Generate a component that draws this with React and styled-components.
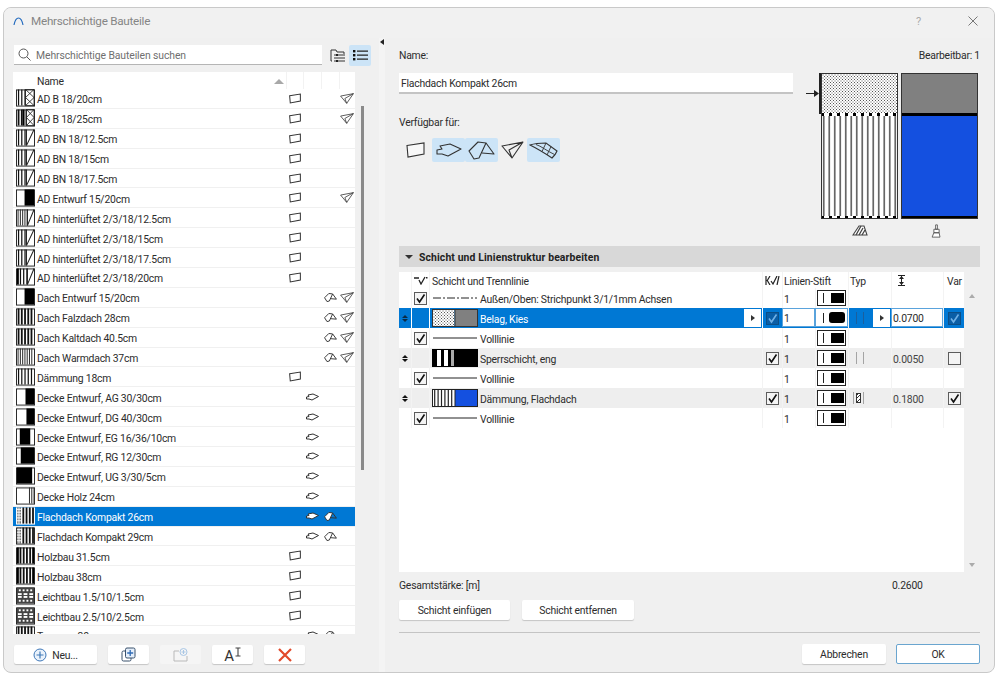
import React from 'react';
import styled, { createGlobalStyle } from 'styled-components';

const GlobalStyle = createGlobalStyle`
    html, body {
        margin: 0;
        padding: 0;
        background: #fff;
        overflow: hidden;
    }
    * { box-sizing: border-box; }
`;

const Window = styled.div`
    width: 992px;
    height: 666px;
    margin: 7px 0 0 3px;
    background: #f0f0f0;
    border: 1px solid #c9c9c9;
    border-radius: 8px;
    overflow: hidden;
    display: flex;
    flex-direction: column;
    font-family: Roboto, "Noto Sans", sans-serif;
    font-size: 10.4px;
    letter-spacing: -0.22px;
    color: #2c2c2c;
`;

const TitleBar = styled.div`
    height: 30px;
    flex: none;
    display: flex;
    align-items: center;
    padding: 0 16px 4px 9px;
    color: #858585;
    font-size: 11.7px;
    letter-spacing: -0.26px;
    background: #f1f1f1;

    .title { margin-left: 7px; flex: 1; }
    .help { color: #a9a9a9; width: 52px; font-size: 11px; }
`;

const Body = styled.div`
    flex: 1;
    display: flex;
    min-height: 0;
`;

const LeftPanel = styled.div`
    width: 375px;
    flex: none;
    padding: 7px 0 0 10px;
    display: flex;
    flex-direction: column;
`;

const SearchRow = styled.div`
    display: flex;
    align-items: center;
    height: 20px;
    margin-bottom: 7px;
`;

const SearchBox = styled.div`
    width: 308px;
    height: 20px;
    background: #fff;
    border-bottom: 1px solid #b5b5b5;
    display: flex;
    align-items: center;
    padding-left: 4px;
    gap: 5px;
    color: #6f6f6f;
    letter-spacing: -0.1px;
`;

const Lowered = styled.span`
    padding-top: 2px;
    display: inline-block;
    white-space: nowrap;
`;

const ViewBtn = styled.div`
    width: 22px;
    height: 21px;
    display: flex;
    align-items: center;
    justify-content: center;
    border-radius: 2px;
    background: ${(p) => (p.$active ? '#cce4f7' : 'transparent')};
`;

const ViewBtns = styled.div`
    display: flex;
    margin-left: 5px;
    gap: 0;
`;

const ListWrap = styled.div`
    display: flex;
    margin-left: -1px;
    height: 562px;
`;

const List = styled.div`
    width: 342px;
    height: 562px;
    background: #fff;
    overflow: hidden;
`;

const ListGrid = styled.div`
    display: grid;
    grid-template-columns: 24px 249px 17px 18px 18px 16px;
    align-items: center;
    height: ${(p) => (p.$head ? '17px' : '19.9px')};
    background: ${(p) => (p.$selected ? '#0078d4' : '#fff')};
    color: ${(p) => (p.$selected ? '#fff' : '#2c2c2c')};
    border-bottom: ${(p) => (p.$head ? 'none' : '1px solid #f0f0f0')};
`;

const SwatchCell = styled.div`
    padding-left: 3px;
    display: flex;
    align-items: center;
`;

const NameCell = styled.div`
    white-space: nowrap;
    display: flex;
    align-items: center;
    justify-content: space-between;
    padding: ${(p) => (p.$head ? 1 : 3)}px 1px 0 0;
    height: 100%;
`;

const IconCell = styled.div`
    display: flex;
    align-items: center;
    justify-content: center;
    height: 100%;
`;

const HeadCell = styled.div`
    height: 100%;
    border-left: 1px solid #f2f2f2;
`;

const SortArrow = styled.span`
    width: 0;
    height: 0;
    margin-right: 1px;
    border-left: 5px solid transparent;
    border-right: 5px solid transparent;
    border-bottom: 5px solid #a8a8a8;
`;

const ScrollTrack = styled.div`
    width: 10px;
    padding: 34px 0 0 6px;
`;

const ScrollThumb = styled.div`
    width: 3px;
    height: 364px;
    background: #8a8a8a;
`;

const Toolbar = styled.div`
    display: flex;
    margin-top: 11px;
    gap: 11px;
`;

const ToolBtn = styled.div`
    width: ${(p) => p.$w || 41}px;
    height: 19px;
    display: flex;
    align-items: center;
    justify-content: center;
    gap: ${(p) => (p.$tight ? 1 : 5)}px;
    background: ${(p) => (p.$disabled ? '#f5f5f5' : '#fff')};
    box-shadow: ${(p) => (p.$disabled ? 'none' : '0 1px 1px rgba(0,0,0,0.18)')};
    border-radius: 2px;
`;

const FontGlyph = styled.span`
    font-size: 15px;
    line-height: 1;
    color: #333;
    margin-top: 3px;
`;

const SuperCursor = styled.svg`
    margin-bottom: 5px;
`;

const Splitter = styled.div`
    width: 6px;
    flex: none;
    padding: 1px 0 0 1px;
    background: #f4f4f4;
`;

const SplitArrow = styled.div`
    width: 0;
    height: 0;
    border-top: 3px solid transparent;
    border-bottom: 3px solid transparent;
    border-right: 4px solid #222;
`;

const RightPanel = styled.div`
    flex: 1;
    min-width: 0;
    padding: 10px 14px 0 14px;
    display: flex;
    flex-direction: column;
`;

const NameRow = styled.div`
    height: 14px;
    line-height: 16px;
    display: flex;
    justify-content: space-between;
    margin-bottom: 11px;
`;

const TopArea = styled.div`
    display: flex;
    justify-content: space-between;
    height: 173px;
`;

const FormCol = styled.div`
    width: 394px;
`;

const NameInput = styled.div`
    height: 21px;
    line-height: 22px;
    background: #fff;
    border-bottom: 2px solid #c4c4c4;
    padding-left: 2px;
`;

const AvailableLabel = styled.div`
    height: 14px;
    line-height: 16px;
    margin: 21px 0 9px;
`;

const AvailableRow = styled.div`
    display: flex;
    height: 24px;
`;

const AvailableBtn = styled.div`
    width: ${(p) => p.$w}px;
    height: 24px;
    display: flex;
    align-items: center;
    justify-content: center;
    border-radius: 2px;
    background: ${(p) => (p.$on ? '#cce4f7' : 'transparent')};
`;

const Preview = styled.div`
    width: 174px;
    display: flex;
    align-items: flex-start;
`;

const PreviewCol = styled.div`
    width: 77px;
    margin-right: ${(p) => p.$mr || 0}px;
    display: flex;
    flex-direction: column;
    align-items: center;

    svg { display: block; }
    .caption { margin-top: ${(p) => p.$top || 6}px; padding-right: ${(p) => p.$shift || 0}px; }
`;

const SectionHead = styled.div`
    height: 21px;
    flex: none;
    background: #d8d8d8;
    display: flex;
    align-items: center;
    padding-left: 6px;
    gap: 6px;
    font-weight: 700;
    letter-spacing: 0.12px;
    color: #222;
`;

const Caret = styled.span`
    width: 0;
    height: 0;
    border-left: 4px solid transparent;
    border-right: 4px solid transparent;
    border-top: 4px solid #333;
`;

const TableWrap = styled.div`
    display: flex;
    margin-top: 5px;
    height: 300px;
`;

const Table = styled.div`
    width: 565px;
    background: #fff;
`;

const TableRow = styled.div`
    display: grid;
    grid-template-columns: 12px 18px 333px 20px 33px 33px 43px 52px 21px;
    height: ${(p) => (p.$head ? '16px' : '20px')};
    background: ${(p) => (p.$selected ? '#0078d4' : p.$shade ? '#eeeeee' : '#fff')};
    color: ${(p) => (p.$selected ? '#fff' : '#2c2c2c')};
`;

const Cell = styled.div`
    display: flex;
    align-items: center;
    justify-content: ${(p) => p.$justify || 'flex-start'};
    padding-left: ${(p) => p.$pl || 0}px;
    border-left: 1px solid ${(p) => (p.$selected ? '#ffffff' : '#f3f3f3')};
    min-width: 0;
    white-space: nowrap;
    grid-column: ${(p) => (p.$span ? `span ${p.$span}` : 'auto')};
`;

const FirstCell = styled(Cell)`
    border-left: none;
    justify-content: center;
`;

const LayerName = styled.div`
    flex: 1;
    display: flex;
    align-items: center;
    height: 100%;
    gap: 2px;
`;

const RowArrowBtn = styled.div`
    width: 17px;
    height: 18px;
    flex: none;
    margin-right: 1px;
    background: #fff;
    display: flex;
    align-items: center;
    justify-content: center;
`;

const TinyArrow = styled.span`
    width: 0;
    height: 0;
    border-top: 3.5px solid transparent;
    border-bottom: 3.5px solid transparent;
    border-left: 4px solid #333;
`;

const InputCell = styled(Cell)`
    background: #fff;
    color: #2c2c2c;
    border: 1px solid #5aa3dc;
    height: 19px;
`;

const PenBox = styled.div`
    width: 29px;
    height: 16px;
    border: 1.5px solid #222;
    background: #fff;
    display: flex;
    align-items: center;
    padding-left: 5px;

    .bar { width: 1px; height: 10px; background: #222; margin-right: 7px; }
    .ink { width: 13px; height: 10px; background: #000; }
`;

const PenEdit = styled.div`
    width: 100%;
    display: flex;
    align-items: center;
    padding-left: 7px;

    .bar { width: 1px; height: 10px; background: #222; margin-right: 5px; }
    .ink { width: 16px; height: 11px; background: #000; border-radius: 3px; }
`;

const TypMarks = styled.div`
    display: flex;
    flex: ${(p) => (p.$grow ? 1 : 'none')};
    align-items: center;
    gap: ${(p) => (p.$hatched ? 2 : 6)}px;
    margin-left: ${(p) => (p.$hatched ? 4 : 7)}px;

    .bar { width: 1px; height: 12px; background: ${(p) => (p.$blue ? '#1a5f9e' : '#a4a4a4')}; }
    .fill { width: 5px; height: 10px; border: 1px solid #333; background: repeating-linear-gradient(135deg, #333 0 1px, #fff 1px 2.5px); }
`;

const ThickText = styled(Lowered)`
    color: #444;
    padding-left: 1px;
`;

const Box = styled.div`
    width: 13px;
    height: 13px;
    border: 1px solid ${(p) => (p.$blue ? '#0c4f87' : '#5c5c5c')};
    background: ${(p) => (p.$blue ? '#0a5ea6' : '#f4f4f4')};
    display: flex;
    align-items: center;
    justify-content: center;
`;

const DragMark = styled.div`
    display: flex;
    flex-direction: column;
    gap: 1px;
    i {
        display: block;
        width: 0;
        height: 0;
        border-left: 3px solid transparent;
        border-right: 3px solid transparent;
    }
    i:first-child { border-bottom: 3.5px solid ${(p) => p.$c}; }
    i:last-child { border-top: 3.5px solid ${(p) => p.$c}; }
`;

const TableScroll = styled.div`
    width: 16px;
    display: flex;
    flex-direction: column;
    justify-content: space-between;
    align-items: center;
    padding: 22px 0 5px;

    .up { width: 0; height: 0; border-left: 3px solid transparent; border-right: 3px solid transparent; border-bottom: 4px solid #ababab; }
    .down { width: 0; height: 0; border-left: 3px solid transparent; border-right: 3px solid transparent; border-top: 4px solid #ababab; }
`;

const TotalRow = styled.div`
    display: grid;
    grid-template-columns: 493px 1fr;
    height: 14px;
    line-height: 16px;
    margin: 6px 0 8px;
`;

const ActionRow = styled.div`
    display: flex;
    gap: 12px;
`;

const ActionBtn = styled.div`
    width: ${(p) => p.$w}px;
    height: 20px;
    line-height: 21px;
    text-align: center;
    background: #fff;
    border-radius: 2px;
    box-shadow: 0 1px 1px rgba(0,0,0,0.18);
`;

const Divider = styled.div`
    height: 1px;
    background: #c4c4c4;
    margin: 12px 0 11px;
`;

const FooterRow = styled.div`
    display: flex;
    justify-content: flex-end;
    gap: 10px;
`;

const FooterBtn = styled.div`
    width: ${(p) => p.$w}px;
    height: 20px;
    line-height: ${(p) => (p.$primary ? 19 : 21)}px;
    text-align: center;
    background: #fff;
    border-radius: 2px;
    border: ${(p) => (p.$primary ? '1px solid #6aa5cf' : 'none')};
    box-shadow: ${(p) => (p.$primary ? 'none' : '0 1px 1px rgba(0,0,0,0.18)')};
`;

// drawings of the small plan symbols
const WallIcon = ({ w = 12, h = 11, sw = 1.6, fill = 'none' }) => (
    <svg width={w} height={h} viewBox="0 0 19 16">
        <path d="M1 3.5 L18 1 V12 L2 15 Z" fill={fill} stroke="#333" strokeWidth={sw} />
    </svg>
);

const SlabIcon = ({ w = 13, h = 8, sw = 2, fill = 'none' }) => (
    <svg width={w} height={h} viewBox="0 0 26 14">
        <path d="M1 7 L6 6 L4 3 L14 1 L25 6 L12 13 L6 11 H1 Z" fill={fill} stroke="#333" strokeWidth={sw} strokeLinejoin="round" />
    </svg>
);

const RoofIcon = ({ w = 13, h = 9, sw = 2, fill = 'none' }) => (
    <svg width={w} height={h} viewBox="0 0 27 19">
        <path d="M1 10 L10 1 L18 2 L11 17 L6 18 Z" fill={fill} stroke="#333" strokeWidth={sw} strokeLinejoin="round" />
        <path d="M18 2 L26 13 L14 12" fill="none" stroke="#333" strokeWidth={sw} strokeLinejoin="round" />
    </svg>
);

const ShellIcon = ({ w = 14, h = 11, sw = 1.3 }) => (
    <svg width={w} height={h} viewBox="0 0 23 18">
        <path d="M1 5 L22 1 L11 17 Z M22 1 L8 9 L11 17" fill="none" stroke="#333" strokeWidth={sw} strokeLinejoin="round" />
    </svg>
);

const MorphIcon = () => (
    <svg width="29" height="17" viewBox="0 0 29 17">
        <path d="M1 3 C7 1 13 1 17 1 L28 9 C27 12 25 14 23 16 C17 12 9 7 1 3 Z" fill="none" stroke="#333" strokeWidth="1.1" />
        <path d="M7 2.5 C12 4 18 9 25.5 12.5 M22 4.6 L18 13 M17 1 L13 9.5" fill="none" stroke="#333" strokeWidth="0.9" />
    </svg>
);

const Stripes = ({ x, w, h, step, sw = 1, color = '#111' }) => {
    const lines = [];
    for (let lx = x + step / 2; lx < x + w; lx += step) {
        lines.push(<line key={lx} x1={lx} x2={lx} y1={0} y2={h} stroke={color} strokeWidth={sw} />);
    }
    return <g>{lines}</g>;
};

const LightweightCells = ({ x }) => (
    <g fill="#fff">
        {[2, 6, 10, 14].map((dx) => (
            <g key={dx}>
                <rect x={x + dx} y={2} width={2} height={2} />
                <rect x={x + dx} y={13} width={2} height={2} />
            </g>
        ))}
        {[1, 7, 13].map((dx) => (
            <g key={dx}>
                <rect x={x + dx} y={6} width={4} height={2} />
                <rect x={x + dx} y={9} width={4} height={2} />
            </g>
        ))}
    </g>
);

const SwatchPart = ({ type, x, w, h }) => {
    switch (type) {
        case 'k':
            return <rect x={x} y={0} width={w} height={h} fill="#000" />;
        case 'v':
            return <Stripes x={x} w={w} h={h} step={3.4} sw={1.3} />;
        case 'V':
            return <Stripes x={x} w={w} h={h} step={3.4} sw={1.9} />;
        case 'f':
            return <Stripes x={x} w={w} h={h} step={2.4} sw={1.1} color="#333" />;
        case 'x':
            return <path d={`M${x} 0 H${x + w} V${h} H${x} Z M${x} 0 L${x + w} ${h / 2} L${x} ${h} M${x + w} 0 L${x} ${h / 2} L${x + w} ${h}`} fill="none" stroke="#222" strokeWidth="0.9" />;
        case 'd':
            return <path d={`M${x} ${h} L${x + w} 0 M${x} 0 V${h}`} fill="none" stroke="#222" strokeWidth="1.1" />;
        case 'g':
            return (
                <g>
                    <rect x={x} y={0} width={w} height={h} fill="#444" />
                    <LightweightCells x={x} />
                </g>
            );
        case 'p':
            return (
                <g>
                    <Stripes x={x} w={w} h={h} step={1.5} sw={0.7} color="#333" />
                    <path d={`M${x} 2 h${w} M${x} 5 h${w} M${x} 8 h${w} M${x} 11 h${w} M${x} 14 h${w}`} stroke="#fff" strokeWidth="1" />
                </g>
            );
        default:
            return null;
    }
};

// parts is a list like [['v', 9], ['x', 9]], widths add up to 18
const Swatch = ({ parts, inverted }) => {
    let x = 1;
    return (
        <svg width="19" height="18" viewBox="0 0 20 18">
            <rect x="0.5" y="0.5" width="19" height="17" fill="#fff" stroke={inverted ? '#fff' : '#222'} />
            {parts.map(([type, w], i) => {
                const part = <SwatchPart key={i} type={type} x={x} w={w} h={17} />;
                x += w;
                return part;
            })}
        </svg>
    );
};

const PATTERNS = {
    bn: [['v', 10], ['d', 8]],
    ab: [['v', 9], ['x', 9]],
    ab2: [['V', 6], ['k', 2], ['v', 2], ['x', 8]],
    hint: [['f', 11], ['d', 7]],
    hint2: [['k', 2], ['v', 9], ['d', 7]],
    entwurf: [['w', 8], ['k', 10]],
    falz: [['V', 18]],
    kalt: [['f', 18]],
    daem: [['v', 18]],
    ag: [['w', 9], ['k', 9]],
    dg: [['w', 10], ['k', 8]],
    eg: [['w', 3], ['k', 11], ['w', 4]],
    rg: [['w', 4], ['k', 14]],
    ug: [['k', 16], ['w', 2]],
    holz: [['w', 12], ['f', 6]],
    kies: [['p', 5], ['V', 13]],
    heavy: [['k', 2], ['V', 14], ['k', 2]],
    leicht: [['g', 18]],
};

const ROWS = [
    { name: 'AD B 18/20cm', p: 'ab', wall: 1, shell: 1 },
    { name: 'AD B 18/25cm', p: 'ab2', wall: 1, shell: 1 },
    { name: 'AD BN 18/12.5cm', p: 'bn', wall: 1 },
    { name: 'AD BN 18/15cm', p: 'bn', wall: 1 },
    { name: 'AD BN 18/17.5cm', p: 'bn', wall: 1 },
    { name: 'AD Entwurf 15/20cm', p: 'entwurf', wall: 1, shell: 1 },
    { name: 'AD hinterlüftet 2/3/18/12.5cm', p: 'hint', wall: 1 },
    { name: 'AD hinterlüftet 2/3/18/15cm', p: 'bn', wall: 1 },
    { name: 'AD hinterlüftet 2/3/18/17.5cm', p: 'bn', wall: 1 },
    { name: 'AD hinterlüftet 2/3/18/20cm', p: 'hint2', wall: 1 },
    { name: 'Dach Entwurf 15/20cm', p: 'entwurf', roof: 1, shell: 1 },
    { name: 'Dach Falzdach 28cm', p: 'falz', roof: 1, shell: 1 },
    { name: 'Dach Kaltdach 40.5cm', p: 'falz', roof: 1, shell: 1 },
    { name: 'Dach Warmdach 37cm', p: 'kalt', roof: 1, shell: 1 },
    { name: 'Dämmung 18cm', p: 'daem', wall: 1 },
    { name: 'Decke Entwurf, AG 30/30cm', p: 'ag', slab: 1 },
    { name: 'Decke Entwurf, DG 40/30cm', p: 'dg', slab: 1 },
    { name: 'Decke Entwurf, EG 16/36/10cm', p: 'eg', slab: 1 },
    { name: 'Decke Entwurf, RG 12/30cm', p: 'rg', slab: 1 },
    { name: 'Decke Entwurf, UG 3/30/5cm', p: 'ug', slab: 1 },
    { name: 'Decke Holz 24cm', p: 'holz', slab: 1 },
    { name: 'Flachdach Kompakt 26cm', p: 'kies', slab: 1, roof: 1, selected: true },
    { name: 'Flachdach Kompakt 29cm', p: 'kies', slab: 1, roof: 1 },
    { name: 'Holzbau 31.5cm', p: 'heavy', wall: 1 },
    { name: 'Holzbau 38cm', p: 'heavy', wall: 1 },
    { name: 'Leichtbau 1.5/10/1.5cm', p: 'leicht', wall: 1 },
    { name: 'Leichtbau 2.5/10/2.5cm', p: 'leicht', wall: 1 },
    { name: 'Terrasse 30cm', p: 'falz', slab: 1, roof: 1 },
];

const LAYERS = [
    { line: 'dash', name: 'Außen/Oben: Strichpunkt 3/1/1mm Achsen' },
    { layer: 'kies', name: 'Belag, Kies', selected: true, thick: '0.0700', isVar: true },
    { line: 'solid', name: 'Volllinie' },
    { layer: 'sperr', name: 'Sperrschicht, eng', shade: true, marks: 'plain', thick: '0.0050', isVar: false },
    { line: 'solid', name: 'Volllinie' },
    { layer: 'daem', name: 'Dämmung, Flachdach', shade: true, marks: 'hatched', thick: '0.1800', isVar: true },
    { line: 'solid', name: 'Volllinie' },
];

const CheckMark = ({ color = '#111' }) => (
    <svg width="11" height="11" viewBox="0 0 11 11">
        <path d="M2 5.5 L4.5 9 L9.5 1.5" fill="none" stroke={color} strokeWidth="1.6" />
    </svg>
);

const Check = ({ on = true, blue }) => (
    <Box $blue={blue}>{on && <CheckMark color={blue ? '#6fb0e6' : '#111'} />}</Box>
);

const LayerSwatch = ({ kind }) => (
    <svg width="46" height="18" viewBox="0 0 46 18">
        <defs>
            <pattern id="sw-dots" width="3" height="3" patternUnits="userSpaceOnUse">
                <rect width="3" height="3" fill="#fff" />
                <rect width="1" height="1" fill="#555" />
                <rect x="1.5" y="1.5" width="1" height="1" fill="#555" />
            </pattern>
        </defs>
        {kind === 'kies' && (
            <g>
                <rect x="0.5" y="0.5" width="22" height="17" fill="url(#sw-dots)" />
                <rect x="23" y="0.5" width="22.5" height="17" fill="#808080" stroke="#333" />
                <rect x="0.5" y="0.5" width="45" height="17" fill="none" stroke="#333" />
            </g>
        )}
        {kind === 'sperr' && (
            <g>
                <rect width="46" height="18" fill="#000" />
                <rect x="5" y="1" width="4" height="16" fill="#fff" />
                <rect x="12" y="1" width="4" height="16" fill="#fff" />
                <rect x="19" y="1" width="3" height="16" fill="#aaa" />
            </g>
        )}
        {kind === 'daem' && (
            <g>
                <rect x="0.5" y="0.5" width="45" height="17" fill="#fff" stroke="#222" />
                <Stripes x={1} w={21} h={18} step={3.4} sw={1.2} color="#222" />
                <rect x="23" y="0.5" width="22.5" height="17" fill="#1450e0" stroke="#222" />
            </g>
        )}
    </svg>
);

const LineSample = ({ dashed }) => (
    <svg width="46" height="18" viewBox="0 0 46 18">
        <line x1="1" x2="45" y1="9" y2="9" stroke="#222" strokeWidth="1" strokeDasharray={dashed ? '8 2 2 2' : undefined} />
    </svg>
);

const Drag = ({ color }) => (
    <DragMark $c={color}>
        <i />
        <i />
    </DragMark>
);

const LayerRow = ({ row }) => {
    const { selected, shade, line, layer, name, thick, isVar, marks } = row;
    const isLayer = Boolean(layer);
    return (
        <TableRow $selected={selected} $shade={shade}>
            <FirstCell>{isLayer && <Drag color={selected ? '#0b2a45' : '#111'} />}</FirstCell>
            <Cell $selected={selected} $justify="center">{line && <Check />}</Cell>
            <Cell $selected={selected} $pl={2}>
                <LayerName>
                    {isLayer ? <LayerSwatch kind={layer} /> : <LineSample dashed={line === 'dash'} />}
                    <Lowered>{name}</Lowered>
                </LayerName>
                {selected && <RowArrowBtn><TinyArrow /></RowArrowBtn>}
            </Cell>
            <Cell $justify="center" $selected={selected}>{isLayer && <Check blue={selected} />}</Cell>
            {selected ? <InputCell $pl={1}><Lowered>1</Lowered></InputCell> : <Cell $pl={1}><Lowered>1</Lowered></Cell>}
            {selected ? (
                <InputCell>
                    <PenEdit><div className="bar" /><div className="ink" /></PenEdit>
                </InputCell>
            ) : (
                <Cell $pl={1}>
                    <PenBox><div className="bar" /><div className="ink" /></PenBox>
                </Cell>
            )}
            <Cell>
                {selected && <TypMarks $blue $grow><div className="bar" /><div className="bar" /></TypMarks>}
                {selected && <RowArrowBtn><TinyArrow /></RowArrowBtn>}
                {marks === 'plain' && <TypMarks><div className="bar" /><div className="bar" /></TypMarks>}
                {marks === 'hatched' && <TypMarks $hatched><div className="bar" /><div className="fill" /><div className="bar" /></TypMarks>}
            </Cell>
            {selected ? <InputCell $pl={1}><Lowered>{thick}</Lowered></InputCell> : <Cell><ThickText>{thick}</ThickText></Cell>}
            <Cell $justify="center">{isLayer && <Check on={isVar} blue={selected} />}</Cell>
        </TableRow>
    );
};

const ListRow = ({ row }) => {
    const fill = row.selected ? '#fff' : 'none';
    return (
        <ListGrid $selected={row.selected}>
            <SwatchCell><Swatch parts={PATTERNS[row.p]} inverted={row.selected} /></SwatchCell>
            <NameCell>{row.name}</NameCell>
            <IconCell>{row.wall && <WallIcon />}</IconCell>
            <IconCell>{row.slab && <SlabIcon fill={fill} />}</IconCell>
            <IconCell>{row.roof && <RoofIcon fill={fill} />}</IconCell>
            <IconCell>{row.shell && <ShellIcon />}</IconCell>
        </ListGrid>
    );
};

const LeftPreview = () => (
    <svg width="77" height="146" viewBox="0 0 77 146">
        <defs>
            <pattern id="pv-dots" width="3" height="3" patternUnits="userSpaceOnUse">
                <rect width="3" height="3" fill="#fff" />
                <rect width="1" height="1" fill="#555" />
                <rect x="1.5" y="1.5" width="1" height="1" fill="#555" />
            </pattern>
            <pattern id="pv-band" width="8" height="3" patternUnits="userSpaceOnUse">
                <rect width="8" height="3" fill="#fff" />
                <rect width="3" height="3" fill="#000" />
            </pattern>
        </defs>
        <rect width="77" height="146" fill="#fff" />
        <Stripes x={0} w={77} h={146} step={5.5} sw={1.7} color="#666" />
        <rect width="77" height="40" fill="url(#pv-dots)" />
        <rect y="40" width="77" height="3" fill="url(#pv-band)" />
        <rect y="143" width="77" height="3" fill="url(#pv-band)" />
        <rect x="0.5" y="0.5" width="76" height="145" fill="none" stroke="#333" />
    </svg>
);

const RightPreview = () => (
    <svg width="77" height="146" viewBox="0 0 77 146">
        <rect width="77" height="40" fill="#808080" />
        <rect y="40" width="77" height="3" fill="#000" />
        <rect y="43" width="77" height="100" fill="#1450e0" />
        <rect y="143" width="77" height="3" fill="#000" />
        <rect x="0.5" y="0.5" width="76" height="145" fill="none" stroke="#333" />
    </svg>
);

const App = () => (
    <>
        <GlobalStyle />
        <Window>
            <TitleBar>
                <svg width="11" height="9" viewBox="0 0 11 9">
                    <path d="M1 8 C2 3 4 1 5.5 1 C7 1 9 3 10 8" fill="none" stroke="#2a6fc0" strokeWidth="1.2" />
                </svg>
                <span className="title">Mehrschichtige Bauteile</span>
                <span className="help">?</span>
                <svg width="10" height="10" viewBox="0 0 10 10">
                    <path d="M0.5 0.5 L9.5 9.5 M9.5 0.5 L0.5 9.5" stroke="#777" strokeWidth="1" />
                </svg>
            </TitleBar>
            <Body>
                <LeftPanel>
                    <SearchRow>
                        <SearchBox>
                            <svg width="13" height="13" viewBox="0 0 13 13">
                                <circle cx="5.5" cy="5.5" r="4.5" fill="none" stroke="#555" strokeWidth="1" />
                                <path d="M8.8 8.8 L12.5 12.5" stroke="#555" strokeWidth="1" />
                            </svg>
                            <Lowered>Mehrschichtige Bauteilen suchen</Lowered>
                        </SearchBox>
                        <ViewBtns>
                            <ViewBtn>
                                <svg width="16" height="15" viewBox="0 0 16 15">
                                    <path d="M2 13 H1 V2 H6 L7 4 H14 V6" fill="none" stroke="#333" strokeWidth="1" />
                                    <path d="M4 7 H15 M4 10 H15 M4 13 H15" stroke="#333" strokeWidth="1" />
                                    <rect x="6" y="6" width="2" height="2" fill="#222" />
                                    <rect x="6" y="12" width="2" height="2" fill="#222" />
                                </svg>
                            </ViewBtn>
                            <ViewBtn $active>
                                <svg width="15" height="11" viewBox="0 0 15 11">
                                    <rect x="0" y="0" width="2.4" height="2.4" fill="#111" />
                                    <rect x="0" y="4" width="2.4" height="2.4" fill="#111" />
                                    <rect x="0" y="8" width="2.4" height="2.4" fill="#111" />
                                    <path d="M4 1.2 H15 M4 5.2 H15 M4 9.2 H15" stroke="#222" strokeWidth="1.2" />
                                </svg>
                            </ViewBtn>
                        </ViewBtns>
                    </SearchRow>
                    <ListWrap>
                        <List>
                            <ListGrid $head>
                                <div />
                                <NameCell $head>Name<SortArrow /></NameCell>
                                <HeadCell />
                                <HeadCell />
                                <HeadCell />
                                <HeadCell />
                            </ListGrid>
                            {ROWS.map((row) => <ListRow key={row.name} row={row} />)}
                        </List>
                        <ScrollTrack><ScrollThumb /></ScrollTrack>
                    </ListWrap>
                    <Toolbar>
                        <ToolBtn $w={83}>
                            <svg width="14" height="14" viewBox="0 0 14 14">
                                <circle cx="7" cy="7" r="6" fill="#eaf2fb" stroke="#3f78b8" strokeWidth="1" />
                                <path d="M7 3.5 V10.5 M3.5 7 H10.5" stroke="#3f78b8" strokeWidth="1.2" />
                            </svg>
                            <Lowered>Neu...</Lowered>
                        </ToolBtn>
                        <ToolBtn>
                            <svg width="15" height="15" viewBox="0 0 15 15">
                                <rect x="1" y="4" width="9" height="10" rx="1.5" fill="#fff" stroke="#39506b" />
                                <rect x="4.5" y="1" width="9.5" height="10" rx="1.5" fill="#e4eefa" stroke="#39506b" />
                                <path d="M9.2 3 V9 M6.2 6 H12.2" stroke="#2f6bb5" strokeWidth="1.3" />
                            </svg>
                        </ToolBtn>
                        <ToolBtn $disabled>
                            <svg width="15" height="14" viewBox="0 0 15 14">
                                <path d="M1 13 V3 H6 M10 13 H1 M14 8 V13 H10" fill="none" stroke="#b9b9b9" />
                                <circle cx="10.5" cy="4" r="3.5" fill="#f5f5f5" stroke="#a9c6e4" />
                                <path d="M10.5 2 V6 M8.5 4 H12.5" stroke="#a9c6e4" />
                            </svg>
                        </ToolBtn>
                        <ToolBtn $tight>
                            <FontGlyph>A</FontGlyph>
                            <SuperCursor width="6" height="11" viewBox="0 0 6 11">
                                <path d="M0.5 1 H5.5 M0.5 9 H5.5 M3 1 V9" stroke="#444" strokeWidth="1.1" />
                            </SuperCursor>
                        </ToolBtn>
                        <ToolBtn>
                            <svg width="14" height="14" viewBox="0 0 14 14">
                                <path d="M1 1 L13 13 M13 1 L1 13" stroke="#e2492a" strokeWidth="2.2" />
                            </svg>
                        </ToolBtn>
                    </Toolbar>
                </LeftPanel>
                <Splitter><SplitArrow /></Splitter>
                <RightPanel>
                    <NameRow>
                        <span>Name:</span>
                        <span>Bearbeitbar: 1</span>
                    </NameRow>
                    <TopArea>
                        <FormCol>
                            <NameInput>Flachdach Kompakt 26cm</NameInput>
                            <AvailableLabel>Verfügbar für:</AvailableLabel>
                            <AvailableRow>
                                <AvailableBtn $w={33}><WallIcon w={19} h={16} sw={1.1} fill="#f8f8f8" /></AvailableBtn>
                                <AvailableBtn $w={33} $on><SlabIcon w={26} h={14} sw={1.1} /></AvailableBtn>
                                <AvailableBtn $w={33} $on><RoofIcon w={27} h={19} sw={1.1} /></AvailableBtn>
                                <AvailableBtn $w={29}><ShellIcon w={23} h={18} sw={1.1} /></AvailableBtn>
                                <AvailableBtn $w={33} $on><MorphIcon /></AvailableBtn>
                            </AvailableRow>
                        </FormCol>
                        <Preview>
                            <svg width="15" height="146" viewBox="0 0 15 146">
                                <rect x="13" y="0" width="2" height="41" fill="#222" />
                                <path d="M0 20.5 H9" stroke="#222" strokeWidth="1" />
                                <path d="M8 17 L13 20.5 L8 24 Z" fill="#222" />
                            </svg>
                            <PreviewCol $mr={3}>
                                <LeftPreview />
                                <div className="caption">
                                    <svg width="16" height="11" viewBox="0 0 16 11">
                                        <path d="M1 10 L7 1 H12 L15 10 Z" fill="#fff" stroke="#444" strokeWidth="1.1" />
                                        <path d="M4 10 L9 1 M7 10 L11 3 M10 10 L13 5" stroke="#444" strokeWidth="1.3" />
                                    </svg>
                                </div>
                            </PreviewCol>
                            <PreviewCol $shift={6} $top={5}>
                                <RightPreview />
                                <div className="caption">
                                    <svg width="11" height="14" viewBox="0 0 12 16">
                                        <path d="M5 1 H7 V6 H5 Z M3 6 H9 V10 H3 Z M3 10 H9 L10 15 H1 Z" fill="#fff" stroke="#555" strokeWidth="1" />
                                    </svg>
                                </div>
                            </PreviewCol>
                        </Preview>
                    </TopArea>
                    <SectionHead><Caret /><Lowered>Schicht und Linienstruktur bearbeiten</Lowered></SectionHead>
                    <TableWrap>
                        <Table>
                            <TableRow $head>
                                <FirstCell />
                                <Cell $justify="center">
                                    <svg width="14" height="9" viewBox="0 0 14 9">
                                        <path d="M0 2 H5 M5 4 L7 8 L11 1" fill="none" stroke="#222" strokeWidth="1.3" />
                                        <rect x="12" y="1" width="1.5" height="1.5" fill="#222" />
                                    </svg>
                                </Cell>
                                <Cell $pl={2}><Lowered>Schicht und Trennlinie</Lowered></Cell>
                                <Cell $justify="center">
                                    <svg width="16" height="9" viewBox="0 0 16 9">
                                        <path d="M1 0 V9 M2 5 L5 0 M2 4 L5 9 M6 5 L8 8 L12 0 M14 0 L12 9" fill="none" stroke="#222" strokeWidth="1.2" />
                                    </svg>
                                </Cell>
                                <Cell $pl={1} $span={2}><Lowered>Linien-Stift</Lowered></Cell>
                                <Cell $pl={1}><Lowered>Typ</Lowered></Cell>
                                <Cell $pl={6}>
                                    <svg width="7" height="11" viewBox="0 0 7 11">
                                        <path d="M0 0.5 H7 M0 10.5 H7 M3.5 1 V10" stroke="#222" strokeWidth="1" />
                                        <path d="M1 4 L3.5 1 L6 4 Z M1 7 L3.5 10 L6 7 Z" fill="#222" />
                                    </svg>
                                </Cell>
                                <Cell $pl={3}><Lowered>Var</Lowered></Cell>
                            </TableRow>
                            {LAYERS.map((row, i) => <LayerRow key={i} row={row} />)}
                        </Table>
                        <TableScroll>
                            <div className="up" />
                            <div className="down" />
                        </TableScroll>
                    </TableWrap>
                    <TotalRow>
                        <span>Gesamtstärke: [m]</span>
                        <span>0.2600</span>
                    </TotalRow>
                    <ActionRow>
                        <ActionBtn $w={111}>Schicht einfügen</ActionBtn>
                        <ActionBtn $w={112}>Schicht entfernen</ActionBtn>
                    </ActionRow>
                    <Divider />
                    <FooterRow>
                        <FooterBtn $w={84}>Abbrechen</FooterBtn>
                        <FooterBtn $w={84} $primary>OK</FooterBtn>
                    </FooterRow>
                </RightPanel>
            </Body>
        </Window>
    </>
);

export default App;
